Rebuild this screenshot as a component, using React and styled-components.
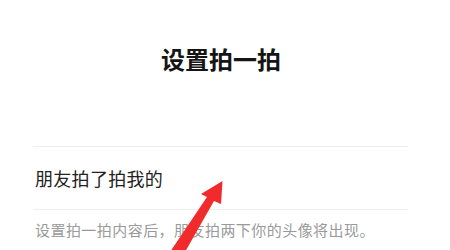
import React from 'react';
import styled, { createGlobalStyle } from 'styled-components';

const Global = createGlobalStyle`
  html, body {
    margin: 0;
    padding: 0;
    background: #ffffff;
  }
  body {
    font-family: "Noto Sans CJK SC", "Liberation Sans", sans-serif;
  }
`;

const Page = styled.div`
  position: relative;
  width: 450px;
  height: 250px;
  overflow: hidden;
  background: #fff;
`;

const Header = styled.header`
  height: 117px;
  display: flex;
  align-items: center;
  justify-content: center;
  padding-right: 8px;
  box-sizing: border-box;
`;

const Title = styled.h1`
  margin: 0;
  font-size: 24px;
  font-weight: 700;
  color: #151515;
  line-height: 1;
`;

const List = styled.section`
  margin: 29px 42px 0 33px;
  border-top: 1px solid #efefef;
`;

const Row = styled.div`
  height: 62px;
  display: flex;
  align-items: center;
  padding-left: 2px;
  border-bottom: 1px solid #efefef;
  font-size: 18px;
  letter-spacing: 0.3px;
  color: #222;
`;

const Hint = styled.p`
  margin: 0;
  padding: 12px 0 0 2px;
  font-size: 15px;
  letter-spacing: 0.45px;
  color: #9a9a9a;
  line-height: 1;
`;

const Arrow = styled.svg`
  position: absolute;
  left: 0;
  top: 0;
  pointer-events: none;
`;

export default function App() {
  return (
    <Page>
      <Global />
      <Header>
        <Title>设置拍一拍</Title>
      </Header>
      <List>
        <Row>朋友拍了拍我的</Row>
        <Hint>设置拍一拍内容后，朋友拍两下你的头像将出现。</Hint>
      </List>
      <Arrow width="450" height="250" viewBox="0 0 450 250">
        <path d="M222.5 181 L201 194 L207 197 L170 252 L185 252 L214 201 L221 204 Z" fill="#f12b2b" />
      </Arrow>
    </Page>
  );
}
